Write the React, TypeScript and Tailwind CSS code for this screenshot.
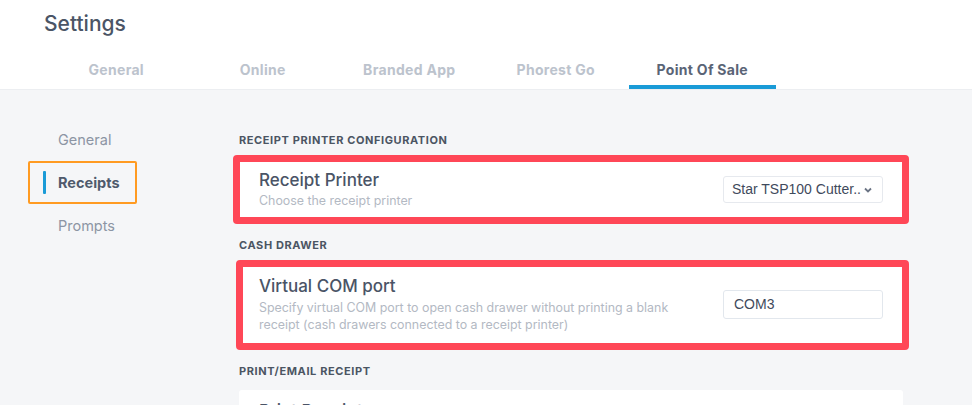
import React from "react";

const tabs = ["General", "Online", "Branded App", "Phorest Go", "Point Of Sale"];

function Card({
  title,
  desc,
  control,
  overlay,
  pad = "py-[11px]",
  descLh = "leading-[16px]",
}: {
  title: string;
  desc: React.ReactNode;
  control?: React.ReactNode;
  overlay?: string;
  pad?: string;
  descLh?: string;
}) {
  return (
    <div className={`relative bg-white rounded-[3px] flex items-center justify-between pl-[20px] pr-[20px] ${pad}`}>
      <div>
        <div className="text-[17px] leading-[20px] font-medium text-[#4a5466]">{title}</div>
        <div className={`mt-[3px] text-[12.4px] ${descLh} text-[#b3b9c3]`}>{desc}</div>
      </div>
      {control}
      {overlay && (
        <div className={`absolute border-[7px] border-[#ff4757] rounded-[4px] pointer-events-none ${overlay}`} />
      )}
    </div>
  );
}

function Heading({ children, first }: { children: React.ReactNode; first?: boolean }) {
  return (
    <div
      className={`${first ? "" : "mt-[17px]"} mb-[11px] text-[11px] leading-[16px] font-bold tracking-[0.6px] text-[#4b5563] uppercase`}
    >
      {children}
    </div>
  );
}

export default function App() {
  return (
    <div
      className="w-[972px] h-[405px] overflow-hidden bg-[#f5f6f8]"
      style={{ fontFamily: "Inter, 'Open Sans', sans-serif" }}
    >
      <div className="bg-white h-[90px] border-b border-[#eceef1]">
        <div className="pl-[44px] pt-[11px] text-[21px] leading-[26px] font-medium text-[#4b5566]">Settings</div>
        <div className="flex pl-[43px] mt-[14px]">
          {tabs.map((t, i) => {
            const active = i === tabs.length - 1;
            return (
              <div
                key={t}
                className={`w-[146.5px] h-[38px] pt-[3px] flex items-center justify-center text-[14px] tracking-[0.3px] font-bold border-b-4 ${
                  active ? "text-[#5a6476] border-[#1a9bd7]" : "text-[#bcc3cd] border-transparent"
                }`}
              >
                {t}
              </div>
            );
          })}
        </div>
      </div>

      <div className="flex">
        <div className="w-[239px] shrink-0 pt-[28px] pl-[28px]">
          <div className="h-[43px] w-[109px] flex items-center pl-[30px] text-[14.5px] text-[#8c95a4]">General</div>
          <div className="relative h-[43px] w-[109px] flex items-center pl-[28px] text-[14.5px] font-bold text-[#4f5a6c] border-[2.5px] border-[#ff9b22] rounded-[2px]">
            <div className="absolute left-[12.5px] top-[7.5px] w-[3px] h-[23px] bg-[#1a9bd7] rounded-[1px]" />
            Receipts
          </div>
          <div className="h-[43px] w-[109px] flex items-center pl-[30px] text-[14.5px] text-[#8c95a4]">Prompts</div>
        </div>

        <div className="w-[664px] pt-[42px]">
          <Heading first>Receipt Printer Configuration</Heading>
          <Card
            title="Receipt Printer"
            desc="Choose the receipt printer"
            overlay="-top-[4px] -bottom-[4px] -left-[6px] -right-[6px]"
            control={
              <div
                className="w-[160px] h-[27px] border border-[#e6e9ee] rounded-[3px] flex items-center justify-between pl-[8px] pr-[10px] text-[14px] text-[#3f4a5c]"
                style={{ fontFamily: "'Liberation Sans', Arial, sans-serif" }}
              >
                <span>Star TSP100 Cutter..</span>
                <svg width="8" height="6" viewBox="0 0 8 6" className="mt-[1px]">
                  <path d="M1 1.5 L4 4.5 L7 1.5" fill="none" stroke="#6b7484" strokeWidth="1.8" />
                </svg>
              </div>
            }
          />
          <Heading>Cash Drawer</Heading>
          <Card
            title="Virtual COM port"
            pad="pt-[12px] pb-[13px]"
            descLh="leading-[17px]"
            desc={
              <>
                Specify virtual COM port to open cash drawer without printing a blank
                <br />
                receipt (cash drawers connected to a receipt printer)
              </>
            }
            overlay="-top-[4px] -bottom-[4px] -left-[3px] -right-[6px]"
            control={
              <div
                className="w-[160px] h-[29px] border border-[#e2e7ed] rounded-[3px] flex items-center pl-[10px] text-[14px] text-[#3f4a5c]"
                style={{ fontFamily: "'Liberation Sans', Arial, sans-serif" }}
              >
                COM3
              </div>
            }
          />
          <Heading>Print/Email Receipt</Heading>
          <Card title="Print Receipt" desc="Print a receipt after each sale" />
        </div>
      </div>
    </div>
  );
}
